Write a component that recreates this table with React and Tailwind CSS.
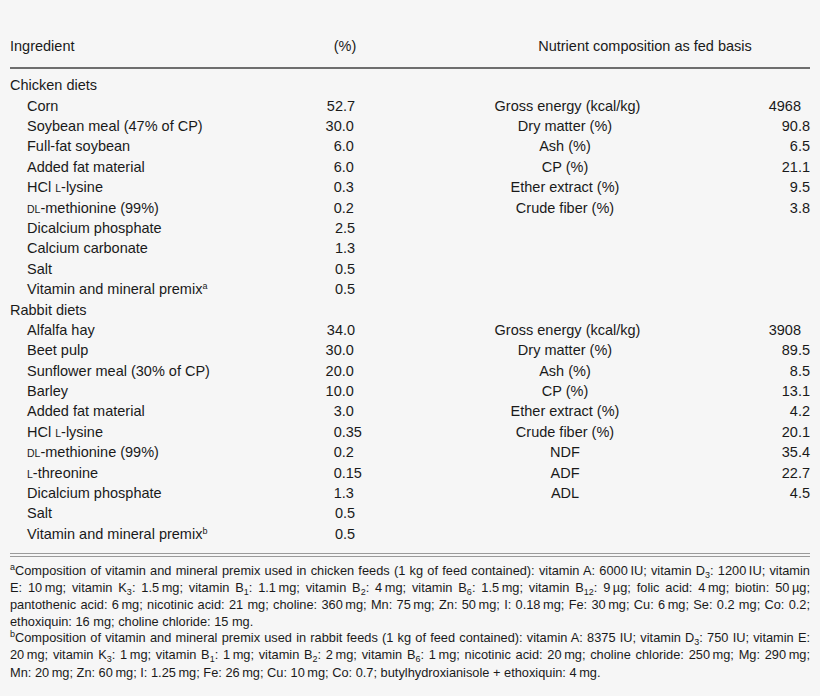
import React from 'react';

const sc = (t) => <span className="text-[10.5px] uppercase">{t}</span>;
const sup = (t) => <span className="text-[9px] relative -top-[5px]">{t}</span>;
const sub = (t) => <span className="text-[9px] relative top-[3px]">{t}</span>;

const chicken = [
  ['Corn', '52.7', 'Gross energy (kcal/kg)', '4968'],
  ['Soybean meal (47% of CP)', '30.0', 'Dry matter (%)', '90.8'],
  ['Full-fat soybean', '6.0', 'Ash (%)', '6.5'],
  ['Added fat material', '6.0', 'CP (%)', '21.1'],
  [<>HCl {sc('L')}-lysine</>, '0.3', 'Ether extract (%)', '9.5'],
  [<>{sc('DL')}-methionine (99%)</>, '0.2', 'Crude fiber (%)', '3.8'],
  ['Dicalcium phosphate', '2.5'],
  ['Calcium carbonate', '1.3'],
  ['Salt', '0.5'],
  [<>Vitamin and mineral premix{sup('a')}</>, '0.5'],
];

const rabbit = [
  ['Alfalfa hay', '34.0', 'Gross energy (kcal/kg)', '3908'],
  ['Beet pulp', '30.0', 'Dry matter (%)', '89.5'],
  ['Sunflower meal (30% of CP)', '20.0', 'Ash (%)', '8.5'],
  ['Barley', '10.0', 'CP (%)', '13.1'],
  ['Added fat material', '3.0', 'Ether extract (%)', '4.2'],
  [<>HCl {sc('L')}-lysine</>, '0.35', 'Crude fiber (%)', '20.1'],
  [<>{sc('DL')}-methionine (99%)</>, '0.2', 'NDF', '35.4'],
  [<>{sc('L')}-threonine</>, '0.15', 'ADF', '22.7'],
  ['Dicalcium phosphate', '1.3', 'ADL', '4.5'],
  ['Salt', '0.5'],
  [<>Vitamin and mineral premix{sup('b')}</>, '0.5'],
];

// decimal-aligned number: integer part right aligned, fraction hangs
const Num = ({ value, intWidth }) => {
  if (!value) return <div className={intWidth} />;
  const [i, f] = value.split('.');
  return (
    <div className="flex">
      <span className={`${intWidth} text-right`}>{i}</span>
      {f !== undefined && <span>.{f}</span>}
    </div>
  );
};

const Row = ({ r }) => (
  <div className="flex h-[20.4px] items-center">
    <div className="w-[290px] pl-[17px]">{r[0]}</div>
    <div className="w-[140px]">
      <Num value={r[1]} intWidth="w-[43px]" />
    </div>
    <div className="w-[255px] text-center">{r[2] || ''}</div>
    <div>
      <Num value={r[3]} intWidth="w-[106px]" />
    </div>
  </div>
);

const thin = '\u2009';

const Line = ({ children, last }) => (
  <div
    className={
      last
        ? 'whitespace-nowrap'
        : 'whitespace-nowrap text-justify [text-align-last:justify]'
    }
  >
    {children}
  </div>
);

export default function App() {
  return (
    <div className="w-[820px] h-[696px] bg-[#f6f6f6] text-[#1a1a1a] px-[10px] pt-[37px] font-['Liberation_Sans',Arial,sans-serif] text-[14.5px] overflow-hidden">
      {/* header */}
      <div className="flex h-[20.4px] items-center">
        <div className="w-[290px]">Ingredient</div>
        <div className="w-[90px] text-center">(%)</div>
        <div className="w-[90px]" />
        <div className="w-[330px] text-center">Nutrient composition as fed basis</div>
      </div>
      <div className="mt-[10px] h-[1.5px] bg-[#6e6e6e]" />

      <div className="mt-[7px]">
        <div className="flex h-[20.4px] items-center">Chicken diets</div>
        {chicken.map((r, k) => (
          <Row key={'c' + k} r={r} />
        ))}
        <div className="flex h-[20.4px] items-center">Rabbit diets</div>
        {rabbit.map((r, k) => (
          <Row key={'r' + k} r={r} />
        ))}
      </div>

      {/* double rule */}
      <div className="mt-[8px] border-t border-b border-[#9a9a9a] h-[4px]" />

      <div className="mt-[6px] text-[12.8px] leading-[16.3px]">
        <Line>
          {sup('a')}Composition of vitamin and mineral premix used in chicken feeds (1 kg of feed contained): vitamin A: 6000{thin}IU; vitamin D{sub('3')}: 1200{thin}IU; vitamin
        </Line>
        <Line>
          E: 10{thin}mg; vitamin K{sub('3')}: 1.5{thin}mg; vitamin B{sub('1')}: 1.1{thin}mg; vitamin B{sub('2')}: 4{thin}mg; vitamin B{sub('6')}: 1.5{thin}mg; vitamin B{sub('12')}: 9{thin}µg; folic acid: 4{thin}mg; biotin: 50{thin}µg;
        </Line>
        <Line>
          pantothenic acid: 6{thin}mg; nicotinic acid: 21 mg; choline: 360{thin}mg; Mn: 75{thin}mg; Zn: 50{thin}mg; I: 0.18{thin}mg; Fe: 30{thin}mg; Cu: 6{thin}mg; Se: 0.2 mg; Co: 0.2;
        </Line>
        <Line last>ethoxiquin: 16 mg; choline chloride: 15 mg.</Line>
        <Line>
          {sup('b')}Composition of vitamin and mineral premix used in rabbit feeds (1 kg of feed contained): vitamin A: 8375 IU; vitamin D{sub('3')}: 750 IU; vitamin E:
        </Line>
        <Line>
          20{thin}mg; vitamin K{sub('3')}: 1{thin}mg; vitamin B{sub('1')}: 1{thin}mg; vitamin B{sub('2')}: 2{thin}mg; vitamin B{sub('6')}: 1{thin}mg; nicotinic acid: 20{thin}mg; choline chloride: 250{thin}mg; Mg: 290{thin}mg;
        </Line>
        <Line last>
          Mn: 20{thin}mg; Zn: 60{thin}mg; I: 1.25{thin}mg; Fe: 26{thin}mg; Cu: 10{thin}mg; Co: 0.7; butylhydroxianisole + ethoxiquin: 4{thin}mg.
        </Line>
      </div>
    </div>
  );
}
